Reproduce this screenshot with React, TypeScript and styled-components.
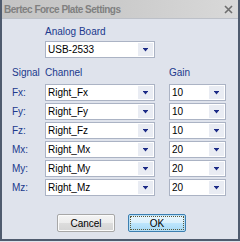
import styled, { createGlobalStyle } from "styled-components";

const GlobalStyle = createGlobalStyle`
  html, body {
    margin: 0;
    padding: 0;
    background: #dfe3ec;
  }
  body {
    font-family: "Liberation Sans", Arial, sans-serif;
    font-size: 10px;
  }
`;

const Window = styled.div`
  box-sizing: border-box;
  width: 240px;
  height: 241px;
  background: #dfe3ec;
  border-left: 2px solid #4f5b6e;
  border-right: 2px solid #4f5b6e;
  border-bottom: 2px solid #4f5b6e;
  display: flex;
  flex-direction: column;
`;

const TitleBar = styled.div`
  height: 18px;
  flex: none;
  display: flex;
  align-items: center;
  justify-content: space-between;
  padding: 0 5px 0 2px;
  background: linear-gradient(to right, #c4c4c4 0%, #cbcbcb 50%, #d9d9d9 100%);
  border-bottom: 1px solid #bcc0c8;
`;

const Title = styled.span`
  font-weight: bold;
  font-size: 10px;
  color: #808080;
  letter-spacing: -0.5px;
`;

const Body = styled.div`
  flex: 1;
  padding: 7px 0 0 10px;
  display: flex;
  flex-direction: column;
`;

const Label = styled.div<{ $row?: boolean }>`
  color: #20398c;
  font-size: 10px;
  line-height: 12px;
  align-self: ${(p) => (p.$row ? "center" : "start")};
`;

const BoardBlock = styled.div`
  display: flex;
  flex-direction: column;
  gap: 3px;
  padding-left: 33px;
`;

const Grid = styled.div`
  margin-top: 9px;
  display: grid;
  grid-template-columns: 33px 124px 57px;
  grid-template-rows: 15px repeat(6, 17px);
  row-gap: 2px;
`;

const Row = styled.div`
  display: contents;
`;

const ComboBox = styled.div<{ $width: number }>`
  box-sizing: border-box;
  width: ${(p) => p.$width}px;
  height: 17px;
  background: #ffffff;
  border: 1px solid #abb3c4;
  display: flex;
  align-items: stretch;
`;

const ComboText = styled.span`
  flex: 1;
  padding-left: 2px;
  color: #000;
  font-size: 10px;
  line-height: 15px;
`;

const DropButton = styled.span`
  width: 15px;
  margin: 1px;
  background: #e9ecf3;
  display: flex;
  align-items: center;
  justify-content: center;
`;

const Buttons = styled.div`
  margin-top: 18px;
  display: flex;
  gap: 13px;
  padding-left: 45px;
`;

const Button = styled.button<{ $default?: boolean }>`
  box-sizing: border-box;
  width: 58px;
  height: 18px;
  padding: 0;
  font-family: "Liberation Sans", Arial, sans-serif;
  font-size: 10px;
  color: #000;
  border-radius: 2px;
  border: 1px solid ${(p) => (p.$default ? "#3c7fb1" : "#a7a7a7")};
  background: ${(p) =>
    p.$default
      ? "linear-gradient(to bottom, #eaf6fd 0%, #d9f0fc 50%, #bee6fd 50%, #a7d9f5 100%)"
      : "linear-gradient(to bottom, #f4f4f4 0%, #ececec 50%, #dddddd 50%, #d4d4d4 100%)"};
  box-shadow: inset 0 0 0 1px ${(p) => (p.$default ? "#b9dff5" : "#fbfbfb")};
  display: flex;
  align-items: center;
  justify-content: center;
`;

const FocusRing = styled.span`
  box-sizing: border-box;
  width: 54px;
  height: 14px;
  border: 1px dotted #5a5a3a;
  display: flex;
  align-items: center;
  justify-content: center;
`;

const Arrow = () => (
  <svg width="5" height="4" viewBox="0 0 5 4">
    <path d="M0 0h5v1H0z M0.5 1h4L2.5 3.5z" fill="#1b2a86" />
  </svg>
);

const CloseIcon = () => (
  <svg width="9" height="9" viewBox="0 0 9 9">
    <path d="M1 1L8 8M8 1L1 8" stroke="#6e6e6e" strokeWidth="1.6" />
  </svg>
);

const Combo = ({ value, width }: { value: string; width: number }) => (
  <ComboBox $width={width}>
    <ComboText>{value}</ComboText>
    <DropButton>
      <Arrow />
    </DropButton>
  </ComboBox>
);

const rows = [
  { signal: "Fx:", channel: "Right_Fx", gain: "10" },
  { signal: "Fy:", channel: "Right_Fy", gain: "10" },
  { signal: "Fz:", channel: "Right_Fz", gain: "10" },
  { signal: "Mx:", channel: "Right_Mx", gain: "20" },
  { signal: "My:", channel: "Right_My", gain: "20" },
  { signal: "Mz:", channel: "Right_Mz", gain: "20" },
];

export default function App() {
  return (
    <>
      <GlobalStyle />
      <Window>
        <TitleBar>
          <Title>Bertec Force Plate Settings</Title>
          <CloseIcon />
        </TitleBar>
        <Body>
          <BoardBlock>
            <Label>Analog Board</Label>
            <Combo value="USB-2533" width={110} />
          </BoardBlock>
          <Grid>
            <Row>
              <Label>Signal</Label>
              <Label>Channel</Label>
              <Label>Gain</Label>
            </Row>
            {rows.map((r) => (
              <Row key={r.signal}>
                <Label $row>{r.signal}</Label>
                <Combo value={r.channel} width={110} />
                <Combo value={r.gain} width={57} />
              </Row>
            ))}
          </Grid>
          <Buttons>
            <Button>Cancel</Button>
            <Button $default>
              <FocusRing>OK</FocusRing>
            </Button>
          </Buttons>
        </Body>
      </Window>
    </>
  );
}
